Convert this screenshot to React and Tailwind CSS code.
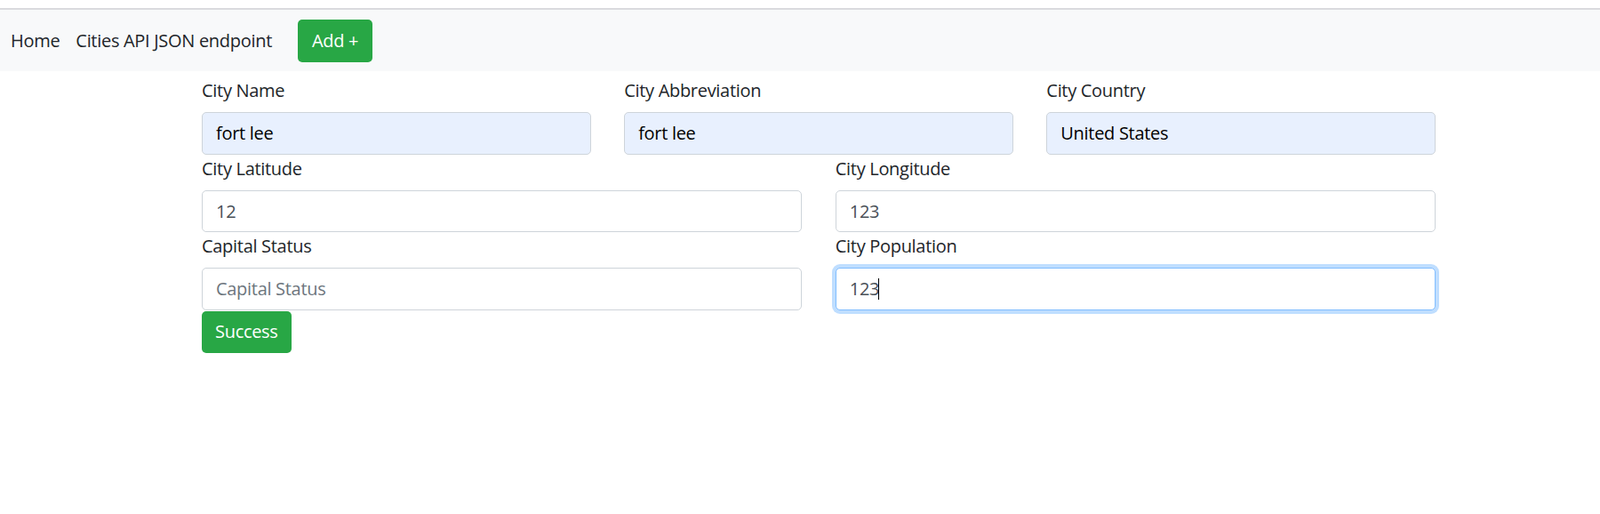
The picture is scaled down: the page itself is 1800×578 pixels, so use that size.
export default function App() {
  const label = "block h-[30px] leading-[32px] mb-[10px] text-[20px] text-[#212529]";
  const base = "block w-full h-[47.5px] rounded-[5px] border px-[15px] text-[20px] leading-[30px] tracking-[-0.3px] outline-none";
  const normal = base + " bg-white border-[#ced4da] text-[#495057] placeholder:text-[#6c757d]";
  const auto = base + " bg-[#e8f0fe] border-[#ced4da] text-[#000000]";
  return (
    <div className="min-h-[578px] bg-white font-['Open_Sans',sans-serif] tracking-[-0.3px]">
      <nav className="mt-[9px] h-[71px] border-t-2 border-[#dadade] bg-[#f8f9fa] flex items-center pl-[12px]">
        <span className="text-[20px] text-[#212529]">Home</span>
        <span className="ml-[18px] text-[20px] text-[#212529]">Cities API JSON endpoint</span>
        <button className="ml-[29px] h-[48px] px-[16px] rounded-[5px] bg-[#28a745] text-white text-[20px]">Add +</button>
      </nav>
      <form className="ml-[227px] w-[1388px] mt-[6px]">
        <div className="grid grid-cols-3 gap-x-[37.5px]">
          <div>
            <label className={label}>City Name</label>
            <input className={auto} defaultValue="fort lee" readOnly />
          </div>
          <div>
            <label className={label}>City Abbreviation</label>
            <input className={auto} defaultValue="fort lee" readOnly />
          </div>
          <div>
            <label className={label}>City Country</label>
            <input className={auto} defaultValue="United States" readOnly />
          </div>
        </div>
        <div className="grid grid-cols-2 gap-x-[37.5px]">
          <div>
            <label className={label}>City Latitude</label>
            <input className={normal} defaultValue="12" readOnly />
          </div>
          <div>
            <label className={label}>City Longitude</label>
            <input className={normal} defaultValue="123" readOnly />
          </div>
        </div>
        <div className="grid grid-cols-2 gap-x-[37.5px]">
          <div>
            <label className={label}>Capital Status</label>
            <input className={normal} placeholder="Capital Status" readOnly />
          </div>
          <div>
            <label className={label}>City Population</label>
            <div className="relative">
              <input className={base + " bg-white border-[#80bdff] text-[#495057] shadow-[0_0_0_4px_rgba(0,123,255,0.25)]"} defaultValue="123" readOnly />
              <span className="absolute left-[48px] top-[12px] h-[24px] w-px bg-[#000000]" />
            </div>
          </div>
        </div>
        <button type="button" className="mt-px h-[47.5px] px-[15px] rounded-[5px] bg-[#28a745] text-white text-[20px]">Success</button>
      </form>
    </div>
  );
}
